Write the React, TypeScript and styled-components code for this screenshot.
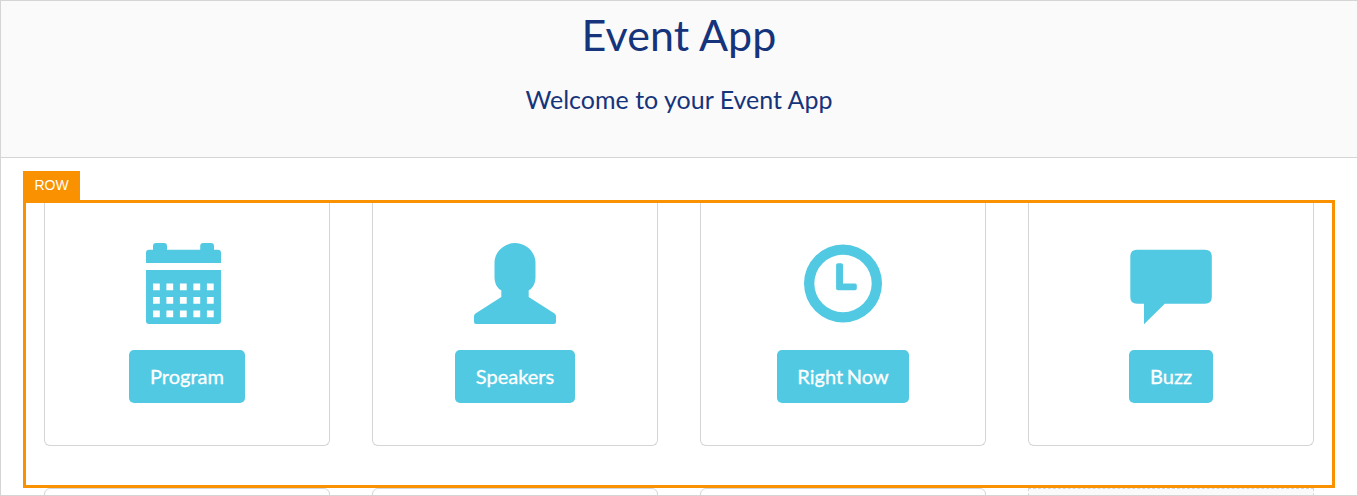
import React from 'react';
import styled, { createGlobalStyle } from 'styled-components';

const GlobalStyle = createGlobalStyle`
  * { box-sizing: border-box; }
  body { margin: 0; background: #fff; font-family: Lato, "Liberation Sans", sans-serif; }
`;

const Frame = styled.main`
  display: flex;
  flex-direction: column;
  height: 496px;
  border: 1px solid #d5d5d5;
  overflow: hidden;
`;

const Header = styled.header`
  flex: none;
  height: 157px;
  background: #fafafa;
  border-bottom: 1px solid #d5d5d5;
  color: #16347b;
  text-align: center;
`;

const Title = styled.h1`
  margin: 0;
  padding-top: 8px;
  font-size: 43px;
  line-height: 52px;
  font-weight: 400;
  letter-spacing: 0.1px;
`;

const Subtitle = styled.p`
  margin: 23px 0 0;
  font-size: 25px;
  line-height: 30px;
`;

const Content = styled.section`
  flex: 1;
  display: flex;
  flex-direction: column;
  align-items: flex-start;
  padding: 13px 22px 0;
`;

const RowTag = styled.div`
  flex: none;
  width: 57px;
  height: 29px;
  background: #fa9100;
  color: #fff;
  font: 400 14px/28px "Liberation Sans", Arial, sans-serif;
  text-align: center;
`;

const Row = styled.div`
  flex: none;
  display: flex;
  gap: 42px;
  width: 100%;
  height: 288px;
  padding: 0 18px 39px;
  border: 3px solid #fa9100;
`;

const NextRow = styled.div`
  flex: none;
  display: flex;
  gap: 42px;
  width: 100%;
  height: 40px;
  padding: 0 21px;
`;

const Card = styled.article`
  flex: 1;
  display: flex;
  flex-direction: column;
  align-items: center;
  padding-top: 40px;
  border: 1px solid #d5d5d5;
  border-top: 0;
  border-radius: 0 0 6px 6px;
`;

const Slot = styled.div<{ $empty?: boolean }>`
  flex: 1;
  border: 1px ${p => (p.$empty ? 'dashed' : 'solid')} #d5d5d5;
  border-radius: ${p => (p.$empty ? '0' : '6px')};
  background: ${p => (p.$empty ? '#fafafa' : '#fff')};
`;

const Icon = styled.svg`
  flex: none;
  width: 82px;
  height: 82px;
  fill: #52c9e3;
`;

const Button = styled.button<{ $width: number }>`
  width: ${p => p.$width}px;
  height: 53px;
  margin-top: 25px;
  padding: 0 0 1px;
  border: 0;
  border-radius: 5px;
  background: #52c9e3;
  color: #fff;
  font: 400 20px/24px Lato, sans-serif;
  word-spacing: -1.5px;
  -webkit-text-stroke: 0.3px #fff;
  white-space: nowrap;
`;

const holes = [40.5, 54, 67.5].flatMap(y =>
  [7, 20.4, 33.9, 47.4, 60.9].map(x => `M${x} ${y}h6.8v6.8h-6.8z`)
).join('');

const icons = {
  calendar: (
    <>
      <path d="M0 20V9.8Q0 6.8 3 6.8H7V3Q7 0 10 0H18Q21 0 21 3V6.8H54.2V3Q54.2 0 57.2 0H65Q68 0 68 3V6.8H72Q75 6.8 75 9.8V20z" />
      <path fillRule="evenodd" d={`M0 27H75V78Q75 81 72 81H3Q0 81 0 78z${holes}`} />
    </>
  ),
  person: (
    <path d="M41 0C51 0 61.5 8 61.5 20V34C61.5 40 59 45.5 54.7 47.2V54L80.5 70.4Q82 71.4 82 73.2V79Q82 81 80 81H2Q0 81 0 79V73.2Q0 71.4 1.5 70.4L27.3 54V47.2C23 45.5 20.5 40 20.5 34V20C20.5 8 31 0 41 0z" />
  ),
  clock: (
    <>
      <path fillRule="evenodd" d="M41 1.5a39 39 0 1 1 0 78a39 39 0 0 1 0-78zM41 11.8a28.7 28.7 0 1 0 0 57.4a28.7 28.7 0 0 0 0-57.4z" />
      <path d="M37.6 20.2H39.2Q41 20.2 41 22V40.4H53Q54.8 40.4 54.8 42.2V45.4Q54.8 47.2 53 47.2H36Q34.1 47.2 34.1 45.4V22Q34.1 20.2 36 20.2z" />
    </>
  ),
  chat: (
    <path d="M7 6.8H75Q81.8 6.8 81.8 13.6V54Q81.8 60.8 75 60.8H34.8L14 81.2V60.8H7Q.3 60.8.3 54V13.6Q.3 6.8 7 6.8z" />
  ),
};

const items: { label: string; icon: keyof typeof icons; width: number }[] = [
  { label: 'Program', icon: 'calendar', width: 116 },
  { label: 'Speakers', icon: 'person', width: 120 },
  { label: 'Right Now', icon: 'clock', width: 132 },
  { label: 'Buzz', icon: 'chat', width: 84 },
];

export default function App() {
  return (
    <>
      <GlobalStyle />
      <Frame>
        <Header>
          <Title>Event App</Title>
          <Subtitle>Welcome to your Event App</Subtitle>
        </Header>
        <Content>
          <RowTag>ROW</RowTag>
          <Row>
            {items.map(item => (
              <Card key={item.label}>
                <Icon viewBox="0 0 82 82" aria-hidden="true">{icons[item.icon]}</Icon>
                <Button $width={item.width}>{item.label}</Button>
              </Card>
            ))}
          </Row>
          <NextRow>
            <Slot />
            <Slot />
            <Slot />
            <Slot $empty />
          </NextRow>
        </Content>
      </Frame>
    </>
  );
}
